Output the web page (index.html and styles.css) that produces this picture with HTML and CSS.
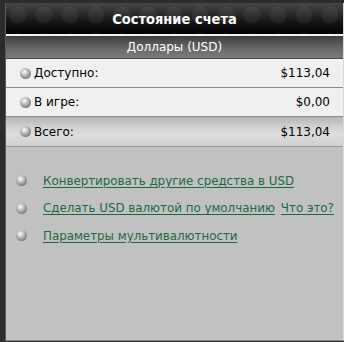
FILE: index.html
```html
<!DOCTYPE html>
<html>
<head>
<meta charset="utf-8">
<link rel="stylesheet" href="styles.css">
</head>
<body>
<div class="panel">
  <div class="title">Состояние счета</div>
  <div class="subtitle">Доллары (USD)</div>
  <div class="row">
    <span class="ball"></span><span class="label">Доступно:</span><span class="value">$113,04</span>
  </div>
  <div class="row">
    <span class="ball"></span><span class="label">В игре:</span><span class="value">$0,00</span>
  </div>
  <div class="row total">
    <span class="ball"></span><span class="label">Всего:</span><span class="value">$113,04</span>
  </div>
  <ul class="links">
    <li><span class="ball"></span><a href="#">Конвертировать другие средства в USD</a></li>
    <li><span class="ball"></span><a href="#">Сделать USD валютой по умолчанию</a><a class="what" href="#">Что это?</a></li>
    <li><span class="ball"></span><a href="#">Параметры мультивалютности</a></li>
  </ul>
</div>
</body>
</html>
```

FILE: styles.css
```css
html, body {
  margin: 0;
  padding: 0;
}
body {
  background: #2c2c2c;
  font-family: "DejaVu Sans", Verdana, sans-serif;
  width: 344px;
  height: 342px;
  overflow: hidden;
}
.panel {
  margin: 3px 0 0 5px;
  height: 337px;
  border-left: 1px solid #5c5c5c;
  border-right: 1px solid #d8d8d8;
  border-bottom: 1px solid #8a8a8a;
  background: #c1c1c1;
  display: flex;
  flex-direction: column;
}
.title {
  height: 31px;
  line-height: 32px;
  text-align: center;
  color: #fff;
  font-family: "DejaVu Sans Condensed", "DejaVu Sans", sans-serif;
  font-stretch: condensed;
  font-weight: bold;
  font-size: 14.5px;
  background:
    radial-gradient(circle at 12px 12px, rgba(255,255,255,0.05) 0 8px, transparent 9px) 0 0 / 26px 26px,
    linear-gradient(#464646, #1a1a1a 55%, #000);
  border-bottom: 2px solid #f2f2f2;
}
.subtitle {
  height: 22px;
  line-height: 23px;
  text-align: center;
  color: #fff;
  font-size: 12px;
  background: linear-gradient(#3d3d3d, #6a6a6a 60%, #7c7c7c);
  border-bottom: 1px solid #4a4a4a;
}
.row {
  height: 28px;
  display: flex;
  align-items: center;
  background: #f0f0f0;
  border-bottom: 1px solid #8c8c8c;
  font-size: 12px;
  color: #000;
  padding: 0 13px 0 14px;
}
.row.total {
  height: 29px;
  background: linear-gradient(#b4b4b4, #d2d2d2 35%, #dcdcdc 60%, #d0d0d0);
  border-bottom: 1px solid #9a9a9a;
}
.ball {
  width: 11px;
  height: 11px;
  border-radius: 50%;
  background: radial-gradient(circle at 40% 35%, #ffffff 0, #d0d0d0 25%, #8a8a8a 65%, #555 100%);
  flex: none;
  margin-right: 3px;
}
.label {
  flex: 1;
}
.value {
  text-align: right;
}
.links {
  list-style: none;
  margin: 0;
  padding: 20px 0 0 10px;
}
.links li {
  height: 27.5px;
  display: flex;
  align-items: center;
  font-size: 11.85px;
  white-space: nowrap;
}
.links .ball {
  margin-right: 16px;
}
.links a {
  color: #1c6a44;
  text-decoration: underline;
  text-underline-offset: 2px;
}
.links a.what {
  margin-left: 6px;
}
```
